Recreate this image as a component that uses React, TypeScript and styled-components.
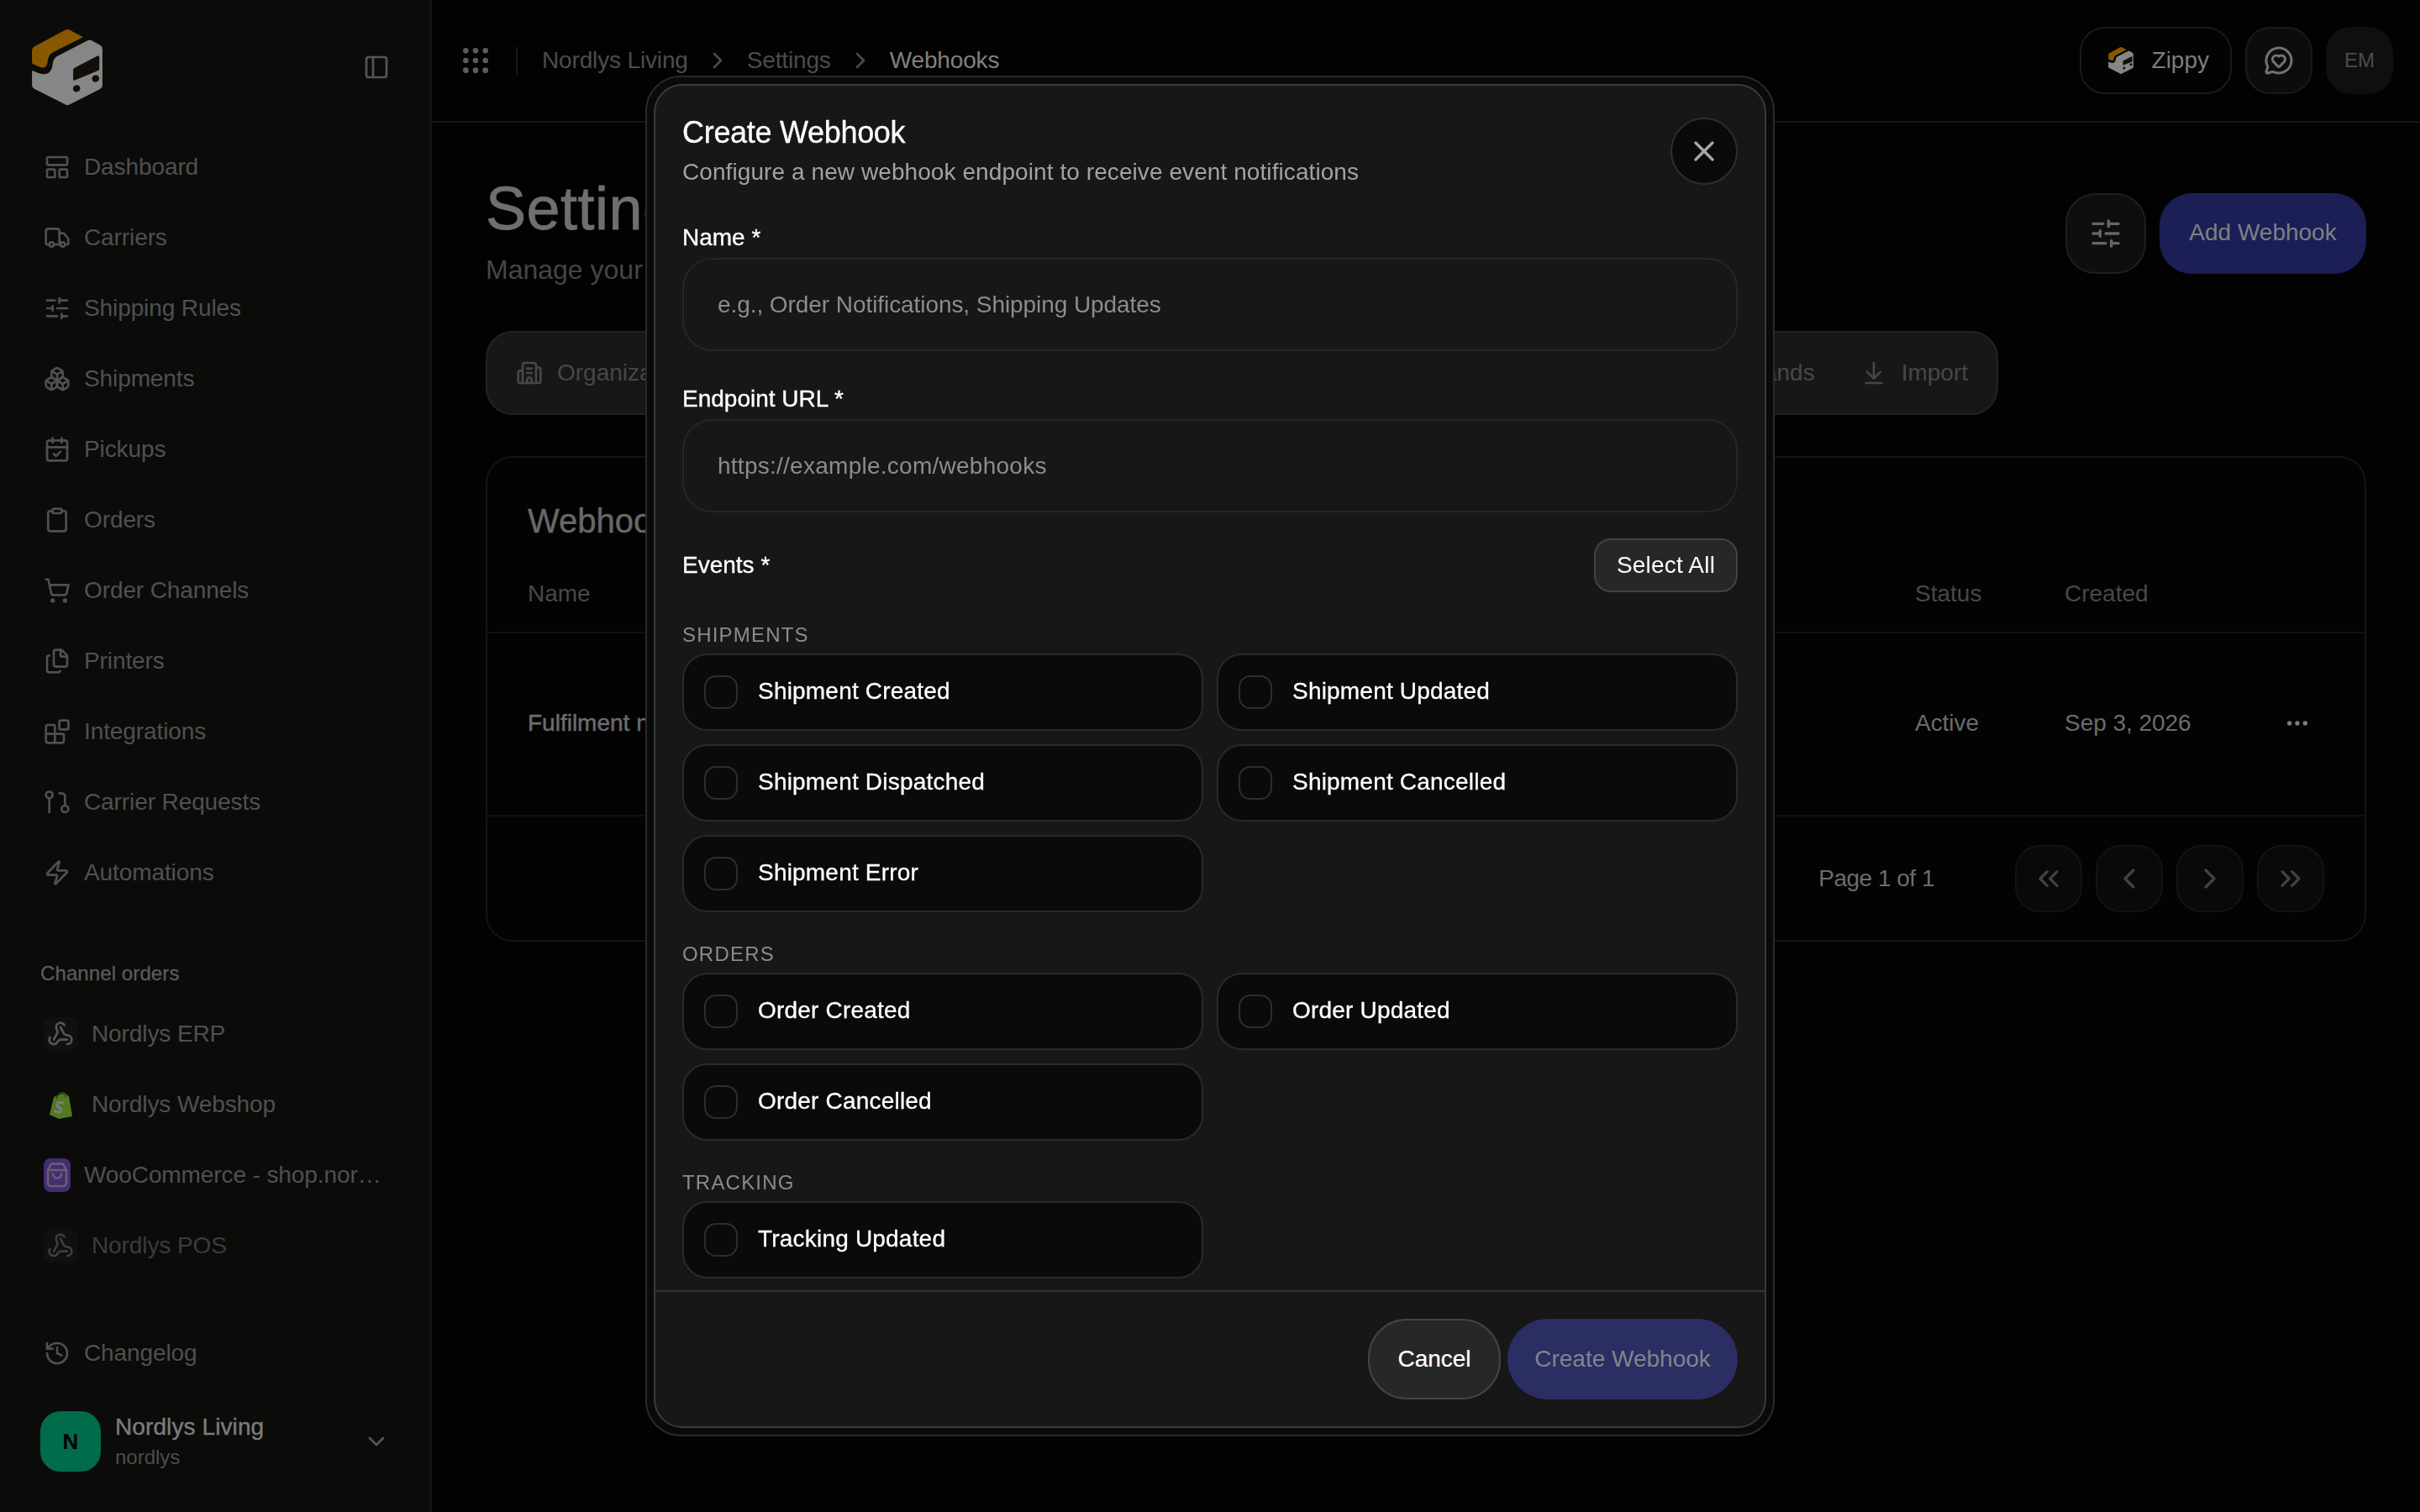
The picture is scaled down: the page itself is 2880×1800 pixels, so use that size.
import React from 'react';
import styled, { createGlobalStyle } from 'styled-components';
import {
  PanelLeft, LayoutPanelTop, Truck, SlidersHorizontal, Boxes, CalendarCheck, Clipboard, ShoppingCart, Files, Blocks,
  Zap, History, Webhook, ChevronDown, ChevronRight, ChevronLeft, ChevronsLeft, ChevronsRight, Grip, MessageCircleHeart,
  Building2, ArrowDownToLine, Ellipsis, X, Users, CreditCard, Bell, Tag,
} from 'lucide-react';

const GlobalStyle = createGlobalStyle`
  html, body { margin: 0; padding: 0; background: #020202; }
  body { font-family: "Liberation Sans", Arial, sans-serif; font-size: 28px; letter-spacing: 0; }
  * { box-sizing: border-box; }
  #root { width: 2880px; height: 1800px; overflow: hidden; }
`;

const Page = styled.div`
  position: relative;
  display: flex;
  width: 2880px;
  height: 1800px;
  overflow: hidden;
`;

/* ---------- sidebar ---------- */
const Sidebar = styled.aside`
  flex: 0 0 514px;
  width: 514px;
  min-width: 0;
  height: 100%;
  display: flex;
  flex-direction: column;
  background: #0b0b0a;
  border-right: 2px solid #141414;
`;
const BrandRow = styled.div`
  flex: 0 0 157px;
  display: flex;
  justify-content: space-between;
  align-items: flex-start;
  padding: 32px 48px 0 32px;
  color: #555;
`;
const CollapseSlot = styled.span`
  display: flex;
  margin-top: 32px;
`;
const NavList = styled.nav`
  display: flex;
  flex-direction: column;
`;
const NavItem = styled.a`
  display: flex;
  align-items: center;
  gap: 16px;
  height: 84px;
  padding-left: 52px;
  letter-spacing: -0.1px;
  color: #505050;
  white-space: nowrap;
`;
const GroupLabel = styled.div`
  margin: 62px 0 14px 48px;
  font-size: 24px;
  line-height: 32px;
  letter-spacing: 0.1px;
  color: #5c5c5c;
  -webkit-text-stroke: 0.3px #5c5c5c;
`;
const ChannelItem = styled.a<{ $dim?: boolean; $gap?: number }>`
  display: flex;
  align-items: center;
  gap: ${(p) => p.$gap ?? 17}px;
  height: 84px;
  min-width: 0;
  padding: 0 57px 0 52px;
  letter-spacing: -0.1px;
  color: ${(p) => (p.$dim ? '#3c3c3c' : '#505050')};
`;
const ChannelText = styled.span`
  min-width: 0;
  overflow: hidden;
  white-space: nowrap;
  text-overflow: ellipsis;
`;
const ChannelIconBox = styled.span<{ $dim?: boolean }>`
  flex: 0 0 40px;
  height: 40px;
  display: flex;
  align-items: center;
  justify-content: center;
  border-radius: 8px;
  background: #101013;
  color: ${(p) => (p.$dim ? '#3e3e3e' : '#565656')};
`;
const ShopifyBox = styled.span`
  flex: 0 0 40px;
  height: 40px;
  display: flex;
  align-items: center;
  justify-content: center;
`;
const WooBox = styled.span`
  flex: 0 0 32px;
  height: 40px;
  display: flex;
  border-radius: 8px;
  background: #462c72;
`;
const SidebarFoot = styled.div`
  margin-top: auto;
  padding-bottom: 48px;
`;
const OrgRow = styled.div`
  display: flex;
  align-items: center;
  gap: 17px;
  margin-top: 27px;
  padding: 0 48px;
`;
const OrgAvatar = styled.span`
  flex: 0 0 72px;
  height: 72px;
  display: flex;
  align-items: center;
  justify-content: center;
  border-radius: 24px;
  background: #006c4b;
  color: #020202;
  font-size: 26px;
  font-weight: 700;
`;
const OrgText = styled.div`
  display: flex;
  flex-direction: column;
`;
const OrgName = styled.span`
  font-size: 28px;
  line-height: 38px;
  letter-spacing: 0.1px;
  color: #7c7c7c;
  -webkit-text-stroke: 0.4px #7c7c7c;
`;
const OrgSlug = styled.span`
  font-size: 24px;
  line-height: 34px;
  color: #4c4c4c;
`;
const OrgChevron = styled.span`
  display: flex;
  margin-left: auto;
  color: #555;
`;

/* ---------- main ---------- */
const Main = styled.main`
  flex: 1;
  min-width: 0;
  display: flex;
  flex-direction: column;
  background: #020202;
`;
const TopBar = styled.header`
  flex: 0 0 146px;
  display: flex;
  align-items: center;
  padding: 0 32px;
  border-bottom: 2px solid #161616;
`;
const GripSlot = styled.span`
  display: flex;
  color: #5c5c5c;
  & circle { fill: currentColor; }
`;
const TopDivider = styled.span`
  width: 2px;
  height: 33px;
  margin: 0 29px 0 28px;
  background: #1a1a1a;
`;
const Crumbs = styled.div`
  display: flex;
  align-items: center;
  gap: 19px;
  padding-bottom: 1px;
  color: #4a4a4a;
  letter-spacing: -0.15px;
`;
const Crumb = styled.span<{ $current?: boolean }>`
  color: ${(p) => (p.$current ? '#808080' : '#4c4c4c')};
`;
const TopActions = styled.div`
  display: flex;
  gap: 16px;
  margin-left: auto;
`;
const ZippyButton = styled.button`
  display: flex;
  align-items: center;
  gap: 20px;
  height: 80px;
  padding: 0 25px 0 30px;
  border: 2px solid #1a1a1a;
  border-radius: 30px;
  background: #030303;
  color: #7d7d7d;
  font: inherit;
`;
const SquareTop = styled.button<{ $plain?: boolean }>`
  width: 80px;
  height: 80px;
  display: flex;
  align-items: center;
  justify-content: center;
  padding: 0;
  border: 2px solid ${(p) => (p.$plain ? '#0f0f0f' : '#1a1a1a')};
  border-radius: 30px;
  background: ${(p) => (p.$plain ? '#0f0f0f' : '#0c0c0c')};
  color: ${(p) => (p.$plain ? '#4c4c4c' : '#727272')};
  font: inherit;
  font-size: 24px;
`;
const Content = styled.div`
  padding: 62px 64px 0;
`;
const HeadRow = styled.div`
  display: flex;
  justify-content: space-between;
  align-items: flex-start;
`;
const PageTitle = styled.h1`
  margin: 0;
  font-size: 72px;
  line-height: 80px;
  font-weight: 400;
  letter-spacing: 0.5px;
  color: #6f6f6f;
  -webkit-text-stroke: 0.8px #6f6f6f;
`;
const PageSub = styled.p`
  margin: 12px 0 0;
  font-size: 32px;
  line-height: 42px;
  color: #464646;
`;
const HeadActions = styled.div`
  display: flex;
  gap: 16px;
  margin-top: 22px;
`;
const FilterButton = styled.button`
  width: 96px;
  height: 96px;
  display: flex;
  align-items: center;
  justify-content: center;
  padding: 0;
  border: 2px solid #1f1f1f;
  border-radius: 36px;
  background: #0e0e0e;
  color: #666;
`;
const AddButton = styled.button`
  height: 96px;
  width: 246px;
  padding: 0 0 2px;
  border: 0;
  border-radius: 38px;
  background: #1c1f55;
  color: #7f7f83;
  font: inherit;
`;
const TabsBar = styled.div`
  display: flex;
  justify-content: space-between;
  align-items: center;
  width: 1800px;
  height: 100px;
  margin-top: 52px;
  padding: 0 34px 0 34px;
  border: 2px solid #222;
  border-radius: 32px;
  background: #171717;
`;
const TabGroup = styled.div<{ $gap: number }>`
  display: flex;
  gap: ${(p) => p.$gap}px;
`;
const Tab = styled.span`
  display: flex;
  align-items: center;
  gap: 17px;
  color: #474747;
  white-space: nowrap;
`;
const Card = styled.section`
  height: 578px;
  margin-top: 49px;
  border: 2px solid #141414;
  border-radius: 32px;
  background: #030303;
  display: flex;
  flex-direction: column;
`;
const CardTitle = styled.h2`
  margin: 49px 0 16px 48px;
  font-size: 40px;
  line-height: 52px;
  font-weight: 400;
  color: #686868;
  -webkit-text-stroke: 0.4px #686868;
`;
const TableRow = styled.div<{ $height: number; $lift?: number }>`
  display: grid;
  grid-template-columns: 1fr 178px 261px 32px;
  align-items: center;
  height: ${(p) => p.$height}px;
  padding: 0 64px ${(p) => p.$lift ?? 0}px 48px;
  border-bottom: 2px solid #111;
`;
const HeadCell = styled.span`
  color: #484848;
`;
const Cell = styled.span`
  letter-spacing: -0.05px;
  color: #6c6c6c;
`;
const NameCell = styled.span`
  color: #6c6c6c;
  -webkit-text-stroke: 0.5px #6c6c6c;
`;
const RowMenu = styled.span`
  display: flex;
  color: #7d7d7d;
`;
const Pager = styled.div`
  flex: 1;
  display: flex;
  align-items: center;
  justify-content: flex-end;
  padding-right: 48px;
`;
const PagerText = styled.span`
  margin-right: 96px;
  letter-spacing: -0.5px;
  color: #6c6c6c;
`;
const PagerButtons = styled.div`
  display: flex;
  gap: 16px;
`;
const PagerButton = styled.button`
  width: 80px;
  height: 80px;
  display: flex;
  align-items: center;
  justify-content: center;
  padding: 0;
  border: 2px solid #131313;
  border-radius: 30px;
  background: #090909;
  color: #414141;
`;

/* ---------- modal ---------- */
const ModalLayer = styled.div`
  position: fixed;
  inset: 0;
  display: flex;
  align-items: center;
  justify-content: center;
`;
const ModalRing = styled.div`
  width: 1344px;
  height: 1620px;
  padding: 8px;
  border: 2px solid #2a2a2a;
  border-radius: 42px;
  background: #0a0a0a;
`;
const ModalPanel = styled.div`
  height: 100%;
  display: flex;
  flex-direction: column;
  border: 2px solid #3a3a3a;
  border-radius: 34px;
  background: #171717;
  overflow: hidden;
`;
const ModalHead = styled.div`
  display: flex;
  justify-content: space-between;
  align-items: flex-start;
  padding: 34px 32px 0;
`;
const ModalTitle = styled.h2`
  margin: 0;
  font-size: 36px;
  line-height: 44px;
  font-weight: 400;
  letter-spacing: -0.3px;
  color: #fff;
  -webkit-text-stroke: 0.3px #fff;
`;
const ModalDesc = styled.p`
  margin: 4px 0 0;
  line-height: 42px;
  letter-spacing: 0.08px;
  color: #a2a2a2;
`;
const CloseButton = styled.button`
  width: 80px;
  height: 80px;
  flex: none;
  display: flex;
  align-items: center;
  justify-content: center;
  margin-top: 4px;
  padding: 0;
  border: 2px solid #2e2e2e;
  border-radius: 50%;
  background: #0a0a0a;
  color: #a8a8a8;
`;
const ModalBody = styled.div`
  flex: 1;
  min-height: 0;
  overflow: hidden;
  padding: 39px 32px 0;
`;
const FieldLabel = styled.label`
  display: block;
  line-height: 36px;
  color: #fff;
  -webkit-text-stroke: 0.35px #fff;
`;
const TextField = styled.input<{ $spacing: number }>`
  display: block;
  width: 100%;
  height: 111px;
  margin: 6px 0 39px;
  padding: 0 40px;
  border: 2px solid #262626;
  border-radius: 36px;
  background: transparent;
  color: #fff;
  font: inherit;
  letter-spacing: ${(p) => p.$spacing}px;
  outline: none;
  &::placeholder { color: #8c8c8c; opacity: 1; }
`;
const EventsHead = styled.div`
  display: flex;
  justify-content: space-between;
  align-items: center;
  margin-top: -8px;
  padding-bottom: 1px;
`;
const SelectAll = styled.button`
  width: 171px;
  height: 64px;
  padding: 0;
  border: 2px solid #434343;
  border-radius: 20px;
  background: #272727;
  color: #fff;
  font: inherit;
  letter-spacing: 0.2px;
`;
const GroupTitle = styled.div`
  margin: 34px 0 6px;
  font-size: 24px;
  line-height: 32px;
  letter-spacing: 1.2px;
  text-transform: uppercase;
  color: #8c8c8c;
`;
const EventGrid = styled.div`
  display: grid;
  grid-template-columns: 1fr 1fr;
  gap: 16px;
`;
const EventCard = styled.label`
  display: flex;
  align-items: center;
  gap: 24px;
  height: 92px;
  padding: 0 24px 2px;
  border: 2px solid #2a2a2a;
  border-radius: 30px;
  background: #0a0a0a;
  color: #fff;
  letter-spacing: 0.2px;
  -webkit-text-stroke: 0.3px #fff;
`;
const CheckBox = styled.span`
  flex: 0 0 40px;
  height: 40px;
  margin-top: 2px;
  border: 2px solid #2d2d2d;
  border-radius: 14px;
`;
const ModalFoot = styled.div`
  display: flex;
  justify-content: flex-end;
  gap: 8px;
  padding: 32px;
  border-top: 2px solid #333;
`;
const CancelButton = styled.button`
  width: 158px;
  height: 96px;
  padding: 0;
  border: 2px solid #444;
  border-radius: 46px;
  background: #272727;
  color: #fff;
  font: inherit;
  -webkit-text-stroke: 0.2px #fff;
`;
const SubmitButton = styled.button`
  width: 274px;
  height: 96px;
  padding: 0;
  border: 0;
  border-radius: 48px;
  background: #2a2e62;
  color: #83838b;
  font: inherit;
`;

/* ---------- drawings ---------- */
const Logo = ({ size }: { size: number }) => (
  <svg width={size} height={size} viewBox="37 44 284 284" aria-hidden>
    <path
      d="M172 55 Q180 51 188 55 L235 80 L130 133 Q111 143 110 165 Q108 192 86 187 L60 176 Q55 174 55 168 L55 128 Q55 117 65 112 Z"
      fill="#875800"
    />
    <path
      d="M252 91 Q258 88 264 91 L295 108 Q303 113 303 122 L303 250 Q303 258 295 263 L187 318 Q180 321 173 318 L63 262 Q55 258 55 250 L55 198 L84 209 Q125 218 128 172 Q130 154 146 146 Z"
      fill="#868686"
    />
    <path d="M205 188 L286 146 Q292 144 292 150 L292 192 Q292 196 288 198 L206 232 Q200 234 200 228 L200 196 Q200 190 205 188 Z" fill="#120e08" />
    <ellipse cx="212" cy="261" rx="13" ry="12" transform="rotate(-25 212 261)" fill="#120e08" />
    <ellipse cx="279" cy="226" rx="13" ry="12" transform="rotate(-25 279 226)" fill="#120e08" />
  </svg>
);

const RequestsIcon = () => (
  <svg width="32" height="32" viewBox="0 0 24 24" fill="none" stroke="currentColor" strokeWidth="2" strokeLinecap="round" strokeLinejoin="round" aria-hidden>
    <circle cx="5" cy="5.5" r="3" />
    <path d="M5 8.5V21" />
    <path d="M14 4h2a3 3 0 0 1 3 3v8" />
    <circle cx="19" cy="18" r="3" />
  </svg>
);

const ShopifyIcon = () => (
  <svg width="30" height="34" viewBox="0 0 30 34" aria-hidden>
    <path d="M2 29 L7 8 Q12 6 14 5 Q18 -1 23 6 L25 7 L29 31 L13 34 Z" fill="#4f7a1f" />
    <path d="M10 10 Q12 2 16 3 M17 6 Q16 2 20 4 Q21 5 21 8" fill="none" stroke="#23350c" strokeWidth="1.2" />
    <path d="M18 15 Q12 13 11 17 Q11 20 14.5 21.5 Q18 23.5 14 26 Q11 26.5 9 25" fill="none" stroke="#7c7c7c" strokeWidth="3.2" strokeLinecap="round" />
  </svg>
);

const WooIcon = () => (
  <svg width="32" height="40" viewBox="0 0 32 40" fill="none" stroke="#67626e" strokeWidth="2.5" strokeLinecap="round" strokeLinejoin="round" aria-hidden>
    <path d="M5 14 L9 6.5 H23 L27 14 V29 a4 4 0 0 1 -4 4 H9 a4 4 0 0 1 -4 -4 Z" />
    <path d="M5 14 H27" />
    <path d="M11 18.5 a5 5 0 0 0 10 0" />
  </svg>
);

const NAV: { label: string; icon: React.ReactNode }[] = [
  { label: 'Dashboard', icon: <LayoutPanelTop size={32} /> },
  { label: 'Carriers', icon: <Truck size={32} /> },
  { label: 'Shipping Rules', icon: <SlidersHorizontal size={32} /> },
  { label: 'Shipments', icon: <Boxes size={32} /> },
  { label: 'Pickups', icon: <CalendarCheck size={32} /> },
  { label: 'Orders', icon: <Clipboard size={32} /> },
  { label: 'Order Channels', icon: <ShoppingCart size={32} /> },
  { label: 'Printers', icon: <Files size={32} /> },
  { label: 'Integrations', icon: <Blocks size={32} /> },
  { label: 'Carrier Requests', icon: <RequestsIcon /> },
  { label: 'Automations', icon: <Zap size={32} /> },
];

const EVENT_GROUPS = [
  { title: 'Shipments', events: ['Shipment Created', 'Shipment Updated', 'Shipment Dispatched', 'Shipment Cancelled', 'Shipment Error'] },
  { title: 'Orders', events: ['Order Created', 'Order Updated', 'Order Cancelled'] },
  { title: 'Tracking', events: ['Tracking Updated'] },
];

export default function App() {
  return (
    <Page>
      <GlobalStyle />
      <Sidebar>
        <BrandRow>
          <Logo size={96} />
          <CollapseSlot>
            <PanelLeft size={32} />
          </CollapseSlot>
        </BrandRow>
        <NavList>
          {NAV.map((item) => (
            <NavItem key={item.label}>
              {item.icon}
              {item.label}
            </NavItem>
          ))}
        </NavList>
        <GroupLabel>Channel orders</GroupLabel>
        <ChannelItem>
          <ChannelIconBox><Webhook size={32} /></ChannelIconBox>
          <ChannelText>Nordlys ERP</ChannelText>
        </ChannelItem>
        <ChannelItem>
          <ShopifyBox><ShopifyIcon /></ShopifyBox>
          <ChannelText>Nordlys Webshop</ChannelText>
        </ChannelItem>
        <ChannelItem $gap={16}>
          <WooBox><WooIcon /></WooBox>
          <ChannelText>WooCommerce - shop.nordlys-living.dk</ChannelText>
        </ChannelItem>
        <ChannelItem $dim>
          <ChannelIconBox $dim><Webhook size={32} /></ChannelIconBox>
          <ChannelText>Nordlys POS</ChannelText>
        </ChannelItem>
        <SidebarFoot>
          <NavItem>
            <History size={32} />
            Changelog
          </NavItem>
          <OrgRow>
            <OrgAvatar>N</OrgAvatar>
            <OrgText>
              <OrgName>Nordlys Living</OrgName>
              <OrgSlug>nordlys</OrgSlug>
            </OrgText>
            <OrgChevron><ChevronDown size={32} /></OrgChevron>
          </OrgRow>
        </SidebarFoot>
      </Sidebar>

      <Main>
        <TopBar>
          <GripSlot><Grip size={40} /></GripSlot>
          <TopDivider />
          <Crumbs>
            <Crumb>Nordlys Living</Crumb>
            <ChevronRight size={32} />
            <Crumb>Settings</Crumb>
            <ChevronRight size={32} />
            <Crumb $current>Webhooks</Crumb>
          </Crumbs>
          <TopActions>
            <ZippyButton>
              <Logo size={34} />
              Zippy
            </ZippyButton>
            <SquareTop><MessageCircleHeart size={36} /></SquareTop>
            <SquareTop $plain>EM</SquareTop>
          </TopActions>
        </TopBar>
        <Content>
          <HeadRow>
            <div>
              <PageTitle>Settings</PageTitle>
              <PageSub>Manage your organization settings</PageSub>
            </div>
            <HeadActions>
              <FilterButton><SlidersHorizontal size={40} /></FilterButton>
              <AddButton>Add Webhook</AddButton>
            </HeadActions>
          </HeadRow>
          <TabsBar>
            <TabGroup $gap={54}>
              <Tab><Building2 size={32} />Organization</Tab>
              <Tab><Users size={32} />Users</Tab>
              <Tab><CreditCard size={32} />Billing</Tab>
              <Tab><Bell size={32} />Notifications</Tab>
            </TabGroup>
            <TabGroup $gap={54}>
              <Tab><Tag size={32} />Brands</Tab>
              <Tab><ArrowDownToLine size={32} />Import</Tab>
            </TabGroup>
          </TabsBar>
          <Card>
            <CardTitle>Webhooks</CardTitle>
            <TableRow $height={92}>
              <HeadCell>Name</HeadCell>
              <HeadCell>Status</HeadCell>
              <HeadCell>Created</HeadCell>
              <span />
            </TableRow>
            <TableRow $height={218} $lift={2}>
              <NameCell>Fulfilment notifications</NameCell>
              <Cell>Active</Cell>
              <Cell>Sep 3, 2026</Cell>
              <RowMenu><Ellipsis size={32} /></RowMenu>
            </TableRow>
            <Pager>
              <PagerText>Page 1 of 1</PagerText>
              <PagerButtons>
                <PagerButton><ChevronsLeft size={40} /></PagerButton>
                <PagerButton><ChevronLeft size={40} /></PagerButton>
                <PagerButton><ChevronRight size={40} /></PagerButton>
                <PagerButton><ChevronsRight size={40} /></PagerButton>
              </PagerButtons>
            </Pager>
          </Card>
        </Content>
      </Main>

      <ModalLayer>
        <ModalRing>
          <ModalPanel>
            <ModalHead>
              <div>
                <ModalTitle>Create Webhook</ModalTitle>
                <ModalDesc>Configure a new webhook endpoint to receive event notifications</ModalDesc>
              </div>
              <CloseButton><X size={40} /></CloseButton>
            </ModalHead>
            <ModalBody>
              <FieldLabel>Name *</FieldLabel>
              <TextField $spacing={-0.07} placeholder="e.g., Order Notifications, Shipping Updates" />
              <FieldLabel>Endpoint URL *</FieldLabel>
              <TextField $spacing={0.26} placeholder="https://example.com/webhooks" />
              <EventsHead>
                <FieldLabel>Events *</FieldLabel>
                <SelectAll>Select All</SelectAll>
              </EventsHead>
              {EVENT_GROUPS.map((group) => (
                <div key={group.title}>
                  <GroupTitle>{group.title}</GroupTitle>
                  <EventGrid>
                    {group.events.map((name) => (
                      <EventCard key={name}>
                        <CheckBox />
                        {name}
                      </EventCard>
                    ))}
                  </EventGrid>
                </div>
              ))}
            </ModalBody>
            <ModalFoot>
              <CancelButton>Cancel</CancelButton>
              <SubmitButton>Create Webhook</SubmitButton>
            </ModalFoot>
          </ModalPanel>
        </ModalRing>
      </ModalLayer>
    </Page>
  );
}
